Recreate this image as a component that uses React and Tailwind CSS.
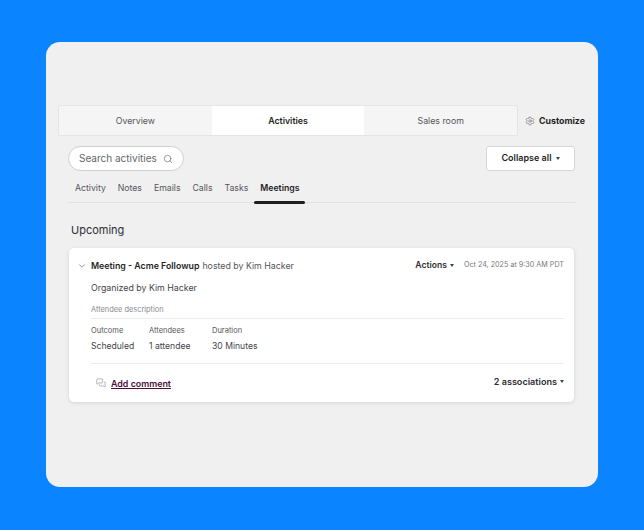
import { ChevronDown, Search, Settings, MessagesSquare } from "lucide-react";

const tabs = ["Overview", "Activities", "Sales room"];
const subTabs = ["Activity", "Notes", "Emails", "Calls", "Tasks", "Meetings"];

const Caret = () => (
  <span className="inline-block w-0 h-0 border-x-[2.5px] border-x-transparent border-t-[3px] border-t-[#33475b]" />
);

const App = () => {
  return (
    <div className="w-[644px] h-[530px] bg-[#0a84ff] pt-[42px] pl-[46px] font-['Inter',sans-serif] text-[#2e2e33] overflow-hidden">
      {/* PANEL */}
      <div className="w-[552px] h-[445px] bg-[#f0f0f0] rounded-[14px] pt-[63px] pl-[12px]">
        {/* TABS */}
        <div className="flex items-center h-[31px]">
          <div className="flex w-[460px] h-[31px] border border-[#e5e5e5] rounded-[2px] bg-[#f5f5f5] text-[8.8px]">
            {tabs.map((t) => (
              <div
                key={t}
                className={
                  t === "Activities"
                    ? "flex-1 flex items-center justify-center pt-[1px] bg-white font-semibold text-[#1f1f1f]"
                    : "flex-1 flex items-center justify-center pt-[1px] text-[#55555a]"
                }
              >
                {t}
              </div>
            ))}
          </div>
          <Settings size={10} strokeWidth={1.25} className="ml-[7px] text-[#55555a]" />
          <span className="ml-[4px] text-[8.8px] font-bold text-[#1f1f1f]">Customize</span>
        </div>

        {/* SEARCH ROW */}
        <div className="flex justify-between w-[507px] ml-[10px] mt-[10px]">
          <div className="flex items-center justify-between w-[116px] h-[25px] bg-white border border-[#cfcfcf] rounded-full pl-[10px] pr-[10px]">
            <span className="text-[10px] text-[#66666b]">Search activities</span>
            <Search size={10} strokeWidth={1.5} className="text-[#66666b]" />
          </div>
          <div className="flex items-center justify-center gap-[4px] w-[89px] h-[25px] pb-[1px] bg-white border border-[#d6d6d6] rounded-[3px] text-[9px] font-semibold text-[#1f1f1f]">
            Collapse all <Caret />
          </div>
        </div>

        {/* SUB TABS */}
        <div className="flex items-center gap-[12px] w-[507px] h-[32px] ml-[10px] pl-[7px] pt-[4px] border-b border-[#e2e2e2] text-[8.7px] text-[#55555a]">
          {subTabs.map((t) => (
            <span key={t} className={t === "Meetings" ? "relative font-semibold text-[#1f1f1f]" : ""}>
              {t}
              {t === "Meetings" && (
                <span className="absolute left-[-6px] -bottom-[9px] w-[51px] h-[3px] rounded-full bg-[#1f1f1f]" />
              )}
            </span>
          ))}
        </div>

        <div className="ml-[13px] mt-[20px] text-[11px] leading-[14px] text-[#2e2e33]">Upcoming</div>

        {/* CARD */}
        <div className="w-[505px] h-[154px] ml-[11px] mt-[11px] bg-white rounded-[5px] shadow-[0_1px_4px_rgba(0,0,0,0.12)] pt-[11px] pl-[8px] pr-[10px]">
          <div className="flex items-center justify-between h-[13px]">
            <div className="flex items-center text-[8.8px]">
              <ChevronDown size={10} strokeWidth={1.5} className="text-[#55555a]" />
              <span className="ml-[4px] font-semibold text-[#1f1f1f]">Meeting - Acme Followup</span>
              <span className="ml-[3px] text-[#55555a]">hosted by Kim Hacker</span>
            </div>
            <div className="flex items-center">
              <span className="text-[8.6px] font-semibold text-[#2e2e33]">Actions</span>
              <span className="ml-[3px] flex"><Caret /></span>
              <span className="ml-[10px] text-[7.2px] text-[#77777c]">Oct 24, 2025 at 9:30 AM PDT</span>
            </div>
          </div>

          <div className="ml-[14px]">
            <div className="mt-[9px] text-[8.8px] leading-[13px] text-[#44444a]">Organized by Kim Hacker</div>
            <div className="mt-[10px] pb-[3px] border-b border-[#ececec] text-[7.4px] leading-[11px] text-[#8a8a8f]">
              Attendee description
            </div>
            <div className="flex pt-[6px] pb-[10px] border-b border-[#ececec]">
              <div className="w-[58px]">
                <div className="text-[7.5px] leading-[11px] text-[#55555a]">Outcome</div>
                <div className="mt-[4px] text-[8.6px] leading-[13px] text-[#44444a]">Scheduled</div>
              </div>
              <div className="w-[63px]">
                <div className="text-[7.5px] leading-[11px] text-[#55555a]">Attendees</div>
                <div className="mt-[4px] text-[8.6px] leading-[13px] text-[#44444a]">1 attendee</div>
              </div>
              <div>
                <div className="text-[7.5px] leading-[11px] text-[#55555a]">Duration</div>
                <div className="mt-[4px] text-[8.6px] leading-[13px] text-[#44444a]">30 Minutes</div>
              </div>
            </div>
            <div className="flex items-center justify-between mt-[11px]">
              <div className="flex items-center pl-[5px]">
                <MessagesSquare size={10} strokeWidth={1.25} className="text-[#77777c]" />
                <span className="ml-[5px] text-[8.9px] font-semibold text-[#4a1238] underline">Add comment</span>
              </div>
              <div className="flex items-center pb-[3px] text-[9.1px] font-semibold text-[#2e2e33]">
                2 associations
                <span className="ml-[3px] flex"><Caret /></span>
              </div>
            </div>
          </div>
        </div>
      </div>
    </div>
  );
};

export default App;
